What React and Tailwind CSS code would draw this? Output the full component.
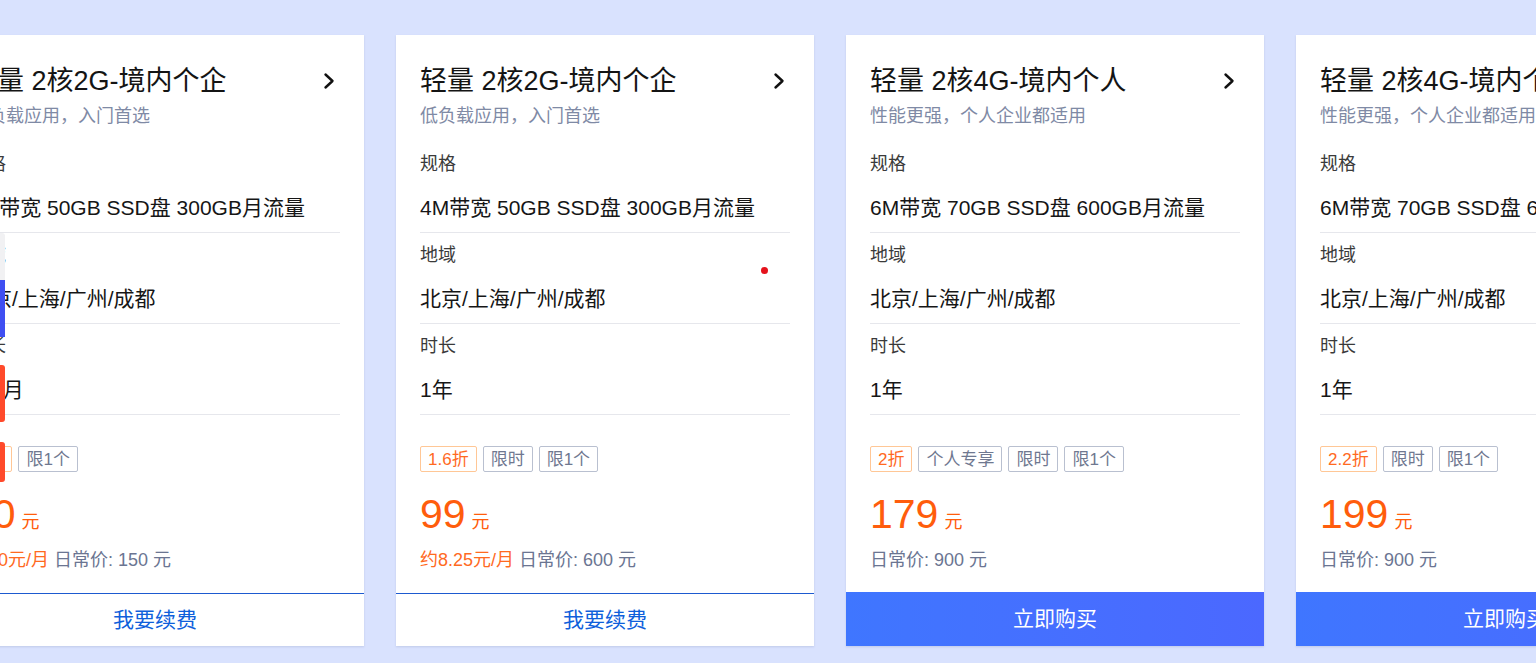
import React from "react";

const cards = [
  {
    title: "轻量 2核2G-境内个企",
    sub: "低负载应用，入门首选",
    spec: "4M带宽 50GB SSD盘 300GB月流量",
    region: "北京/上海/广州/成都",
    dur: "3个月",
    disc: "2折",
    tags: ["限1个"],
    price: "30",
    monthly: "约10元/月",
    orig: "150",
    renew: true,
  },
  {
    title: "轻量 2核2G-境内个企",
    sub: "低负载应用，入门首选",
    spec: "4M带宽 50GB SSD盘 300GB月流量",
    region: "北京/上海/广州/成都",
    dur: "1年",
    disc: "1.6折",
    tags: ["限时", "限1个"],
    price: "99",
    monthly: "约8.25元/月",
    orig: "600",
    renew: true,
    dot: true,
  },
  {
    title: "轻量 2核4G-境内个人",
    sub: "性能更强，个人企业都适用",
    spec: "6M带宽 70GB SSD盘 600GB月流量",
    region: "北京/上海/广州/成都",
    dur: "1年",
    disc: "2折",
    tags: ["个人专享", "限时", "限1个"],
    price: "179",
    monthly: null,
    orig: "900",
    renew: false,
  },
  {
    title: "轻量 2核4G-境内个企",
    sub: "性能更强，个人企业都适用",
    spec: "6M带宽 70GB SSD盘 600GB月流量",
    region: "北京/上海/广州/成都",
    dur: "1年",
    disc: "2.2折",
    tags: ["限时", "限1个"],
    price: "199",
    monthly: null,
    orig: "900",
    renew: false,
  },
];

function Row({ label, value }) {
  return (
    <div className="h-[91px] border-b border-[#e6e7ec] pt-[10px]">
      <div className="text-[18px] leading-[24px] text-[#3a3a3a]">{label}</div>
      <div className="mt-[18px] text-[21px] leading-[28px] text-[#161616] whitespace-nowrap">
        {value}
      </div>
    </div>
  );
}

function Card({ c }) {
  return (
    <div className="relative w-[418px] h-[611px] shrink-0 bg-white flex flex-col shadow-[0_1px_2px_rgba(120,130,170,0.25)]">
      <div className="px-6 pt-[28px]">
        <div className="flex items-center justify-between h-[36px]">
          <div className="text-[27px] leading-[36px] text-[#141414] whitespace-nowrap">
            {c.title}
          </div>
          <svg width="14" height="18" viewBox="0 0 14 18" className="mr-[4px] shrink-0">
            <path
              d="M3.5 2.5 L10.5 9 L3.5 15.5"
              fill="none"
              stroke="#111"
              strokeWidth="2.4"
              strokeLinecap="round"
              strokeLinejoin="round"
            />
          </svg>
        </div>
        <div className="mt-[5px] text-[18px] leading-[24px] text-[#7f8aa5] whitespace-nowrap">
          {c.sub}
        </div>
        <div className="mt-[14px]">
          <Row label="规格" value={c.spec} />
          <Row label="地域" value={c.region} />
          <Row label="时长" value={c.dur} />
        </div>
        <div className="mt-[31px] flex gap-[6px]">
          <span className="h-[26px] px-[7px] flex items-center border border-[#ffc796] rounded-[2px] text-[17px] leading-none text-[#ff6a1f] whitespace-nowrap">
            {c.disc}
          </span>
          {c.tags.map((t) => (
            <span
              key={t}
              className="h-[26px] px-[7px] flex items-center border border-[#b9c0d0] rounded-[2px] text-[17px] leading-none text-[#6f7890] whitespace-nowrap"
            >
              {t}
            </span>
          ))}
        </div>
        <div className="mt-[18px] flex items-baseline h-[48px] text-[#ff5d0c]">
          <span className="text-[41px] leading-[48px]">{c.price}</span>
          <span className="ml-[6px] text-[18px]">元</span>
        </div>
        <div className="mt-[10px] text-[18px] leading-[24px] whitespace-nowrap">
          {c.monthly && <span className="text-[#ff6a1f] mr-[5px]">{c.monthly}</span>}
          <span className="text-[#6b7592]">日常价: {c.orig} 元</span>
        </div>
      </div>
      {c.renew ? (
        <div className="mt-auto h-[53px] border-t border-[#1d5ad0] bg-white flex items-center justify-center text-[21px] text-[#0f5fdb]">
          我要续费
        </div>
      ) : (
        <div className="mt-auto h-[54px] bg-linear-to-r from-[#3f76ff] to-[#4b68ff] flex items-center justify-center text-[21px] text-white">
          立即购买
        </div>
      )}
      {c.dot && (
        <span className="absolute left-[365px] top-[232px] w-[7px] h-[7px] rounded-full bg-[#e5121c]" />
      )}
    </div>
  );
}

export default function App() {
  return (
    <div className="relative w-[1536px] h-[663px] overflow-hidden bg-[#d9e2fe] font-['Liberation_Sans','Noto_Sans_CJK_SC',sans-serif]">
      <div className="flex gap-[32px] ml-[-54px] pt-[35px]">
        {cards.map((c, i) => (
          <Card key={i} c={c} />
        ))}
      </div>
      <div className="absolute left-0 top-[233px] w-[5px] h-[47px] bg-[#f1f1f3] rounded-tr-[3px]" />
      <div className="absolute left-0 top-[280px] w-[5px] h-[57px] bg-[#3f4ff2]" />
      <div className="absolute left-0 top-[365px] w-[5px] h-[57px] bg-[#ff4a2b] rounded-r-[3px]" />
      <div className="absolute left-0 top-[442px] w-[5px] h-[40px] bg-[#ff4a2b] rounded-r-[3px]" />
    </div>
  );
}
